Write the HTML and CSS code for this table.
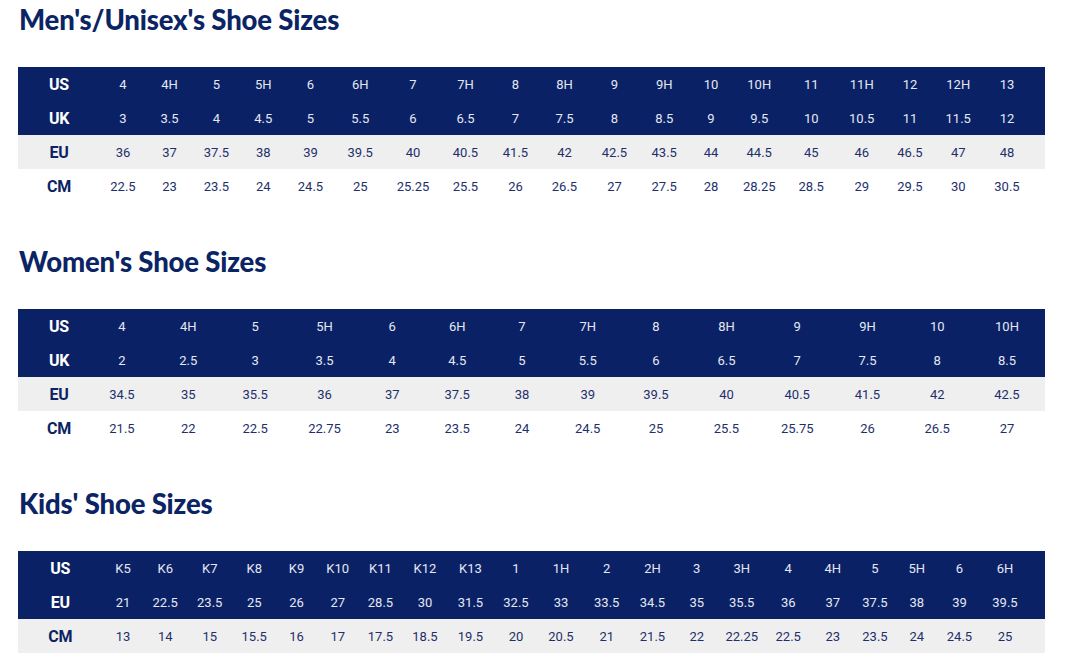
FILE: index.html
```html
<!DOCTYPE html>
<html lang="en">
<head>
<meta charset="utf-8">
<title>Shoe Size Chart</title>
<link rel="stylesheet" href="styles.css">
</head>
<body>
<main class="page">
  <section class="chart">
    <h2 class="chart-title">Men's/Unisex's Shoe Sizes</h2>
    <div class="size-table size-table--men">
      <div class="size-row size-row--dark">
        <span class="size-label">US</span><span>4</span><span>4H</span><span>5</span><span>5H</span><span>6</span><span>6H</span><span>7</span><span>7H</span><span>8</span><span>8H</span><span>9</span><span>9H</span><span>10</span><span>10H</span><span>11</span><span>11H</span><span>12</span><span>12H</span><span>13</span>
      </div>
      <div class="size-row size-row--dark">
        <span class="size-label">UK</span><span>3</span><span>3.5</span><span>4</span><span>4.5</span><span>5</span><span>5.5</span><span>6</span><span>6.5</span><span>7</span><span>7.5</span><span>8</span><span>8.5</span><span>9</span><span>9.5</span><span>10</span><span>10.5</span><span>11</span><span>11.5</span><span>12</span>
      </div>
      <div class="size-row size-row--grey">
        <span class="size-label">EU</span><span>36</span><span>37</span><span>37.5</span><span>38</span><span>39</span><span>39.5</span><span>40</span><span>40.5</span><span>41.5</span><span>42</span><span>42.5</span><span>43.5</span><span>44</span><span>44.5</span><span>45</span><span>46</span><span>46.5</span><span>47</span><span>48</span>
      </div>
      <div class="size-row size-row--white">
        <span class="size-label">CM</span><span>22.5</span><span>23</span><span>23.5</span><span>24</span><span>24.5</span><span>25</span><span>25.25</span><span>25.5</span><span>26</span><span>26.5</span><span>27</span><span>27.5</span><span>28</span><span>28.25</span><span>28.5</span><span>29</span><span>29.5</span><span>30</span><span>30.5</span>
      </div>
    </div>
  </section>

  <section class="chart">
    <h2 class="chart-title">Women's Shoe Sizes</h2>
    <div class="size-table size-table--women">
      <div class="size-row size-row--dark">
        <span class="size-label">US</span><span>4</span><span>4H</span><span>5</span><span>5H</span><span>6</span><span>6H</span><span>7</span><span>7H</span><span>8</span><span>8H</span><span>9</span><span>9H</span><span>10</span><span>10H</span>
      </div>
      <div class="size-row size-row--dark">
        <span class="size-label">UK</span><span>2</span><span>2.5</span><span>3</span><span>3.5</span><span>4</span><span>4.5</span><span>5</span><span>5.5</span><span>6</span><span>6.5</span><span>7</span><span>7.5</span><span>8</span><span>8.5</span>
      </div>
      <div class="size-row size-row--grey">
        <span class="size-label">EU</span><span>34.5</span><span>35</span><span>35.5</span><span>36</span><span>37</span><span>37.5</span><span>38</span><span>39</span><span>39.5</span><span>40</span><span>40.5</span><span>41.5</span><span>42</span><span>42.5</span>
      </div>
      <div class="size-row size-row--white">
        <span class="size-label">CM</span><span>21.5</span><span>22</span><span>22.5</span><span>22.75</span><span>23</span><span>23.5</span><span>24</span><span>24.5</span><span>25</span><span>25.5</span><span>25.75</span><span>26</span><span>26.5</span><span>27</span>
      </div>
    </div>
  </section>

  <section class="chart">
    <h2 class="chart-title">Kids' Shoe Sizes</h2>
    <div class="size-table size-table--kids">
      <div class="size-row size-row--dark">
        <span class="size-label">US</span><span>K5</span><span>K6</span><span>K7</span><span>K8</span><span>K9</span><span>K10</span><span>K11</span><span>K12</span><span>K13</span><span>1</span><span>1H</span><span>2</span><span>2H</span><span>3</span><span>3H</span><span>4</span><span>4H</span><span>5</span><span>5H</span><span>6</span><span>6H</span>
      </div>
      <div class="size-row size-row--dark">
        <span class="size-label">EU</span><span>21</span><span>22.5</span><span>23.5</span><span>25</span><span>26</span><span>27</span><span>28.5</span><span>30</span><span>31.5</span><span>32.5</span><span>33</span><span>33.5</span><span>34.5</span><span>35</span><span>35.5</span><span>36</span><span>37</span><span>37.5</span><span>38</span><span>39</span><span>39.5</span>
      </div>
      <div class="size-row size-row--grey">
        <span class="size-label">CM</span><span>13</span><span>14</span><span>15</span><span>15.5</span><span>16</span><span>17</span><span>17.5</span><span>18.5</span><span>19.5</span><span>20</span><span>20.5</span><span>21</span><span>21.5</span><span>22</span><span>22.25</span><span>22.5</span><span>23</span><span>23.5</span><span>24</span><span>24.5</span><span>25</span>
      </div>
    </div>
  </section>
</main>
</body>
</html>
```
FILE: styles.css
```css
html, body {
  margin: 0;
  padding: 0;
  background: #ffffff;
}

.page {
  padding: 4px 20px 0 18px;
  font-family: Roboto, "Liberation Sans", sans-serif;
}

.chart + .chart {
  margin-top: 43px;
}

.chart-title {
  margin: 0 0 31px 1px;
  font-family: Lato, "Open Sans", sans-serif;
  font-weight: 900;
  font-size: 27.5px;
  line-height: 32px;
  color: #0b2463;
  letter-spacing: -0.15px;
}

.size-table {
  width: 1027px;
}

.size-row {
  display: grid;
  grid-template-columns: var(--cols);
  height: 34px;
  align-items: center;
  font-size: 13px;
}

.size-row > span {
  display: flex;
  justify-content: center;
  white-space: nowrap;
  padding-top: 1px;
}

.size-row .size-label {
  padding-left: var(--label-pad, 0px);
  font-size: 16px;
  font-weight: 700;
  letter-spacing: -0.3px;
}

.size-row--dark {
  background: #0b2165;
  color: #e3e8f3;
}

.size-row--dark .size-label {
  color: #ffffff;
}

.size-row--grey {
  background: #efefef;
  color: #1e2f6c;
}

.size-row--white {
  background: #ffffff;
  color: #1e2f6c;
}

.size-row--grey .size-label,
.size-row--white .size-label {
  color: #0b2463;
}

.size-table--men {
  --cols: 82px 46px 47px 47px 46.5px 48px 51.5px 54px 51px 49px 49px 51px 48.5px 45px 51.5px 52.5px 48.5px 48px 48.5px 49px;
}

.size-table--women {
  --label-pad: 11.5px;
  --cols: 70.5px 67px 65.5px 68.5px 70px 65.5px 64.5px 65px 66.5px 70px 71px 70.5px 70px 69.5px 70px;
}

.size-table--kids {
  --cols: 84.5px 41px 43.5px 45.5px 43.5px 41px 41.5px 44px 45px 46px 45px 45px 46.5px 45px 43.5px 46.5px 46.5px 42.5px 42px 41.5px 44px 47px;
}
```
